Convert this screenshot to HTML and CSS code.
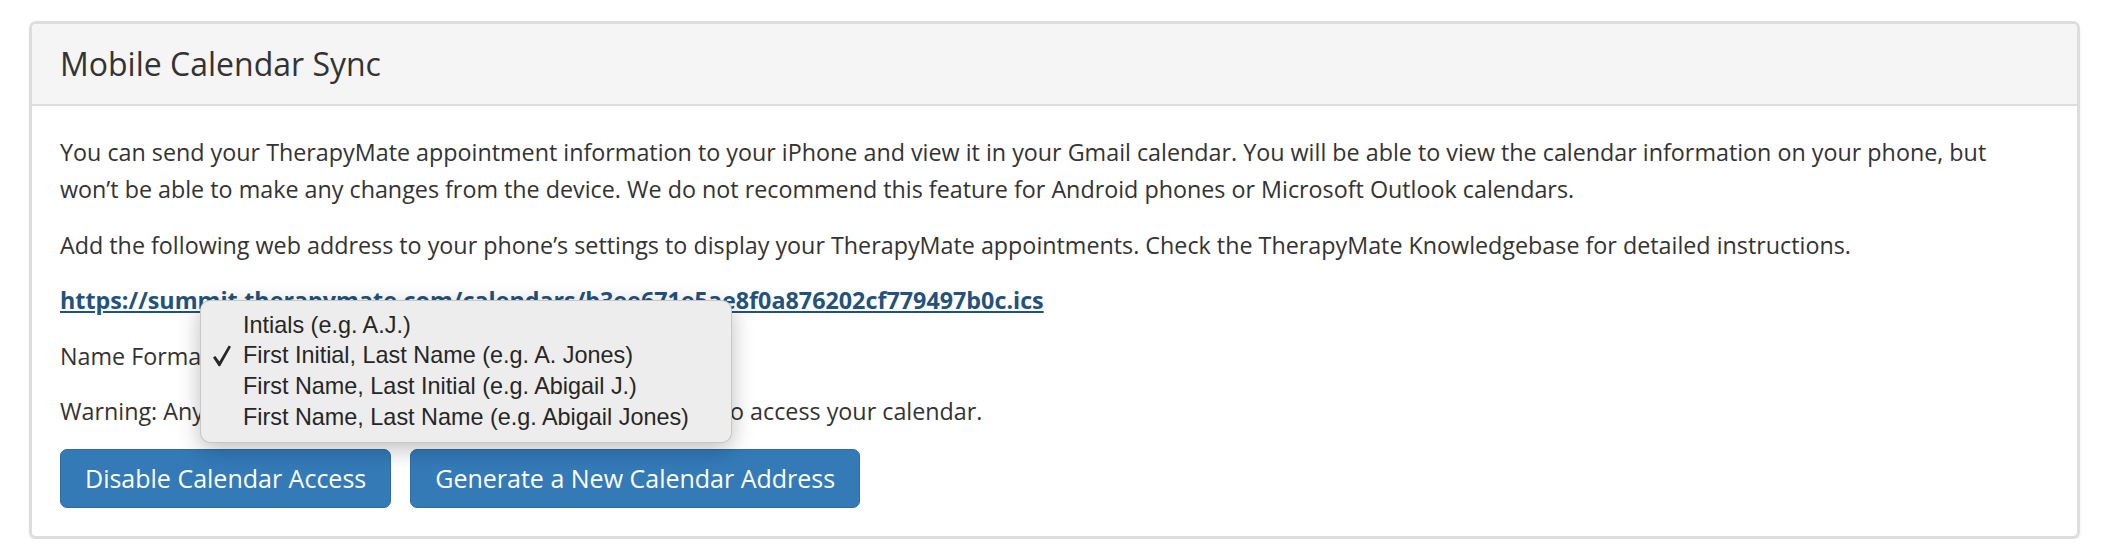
FILE: index.html
```html
<!DOCTYPE html>
<html lang="en">
<head>
<meta charset="utf-8">
<title>Mobile Calendar Sync</title>
<link rel="stylesheet" href="styles.css">
</head>
<body>
<div class="page">
  <section class="panel">
    <header class="panel-heading">
      <h3 class="panel-title">Mobile Calendar Sync</h3>
    </header>
    <div class="panel-body">
      <p>You can send your TherapyMate appointment information to your iPhone and view it in your Gmail calendar. You will be able to view the calendar information on your phone, but won’t be able to make any changes from the device. We do not recommend this feature for Android phones or Microsoft Outlook calendars.</p>
      <p>Add the following web address to your phone’s settings to display your TherapyMate appointments. Check the TherapyMate Knowledgebase for detailed instructions.</p>
      <p><a class="cal-link" href="#">https://summit.therapymate.com/calendars/b3ee671e5ae8f0a876202cf779497b0c.ics</a></p>
      <div class="form-row">
        <label class="form-label" for="nameFormat">Name Format:</label>
        <select class="name-select" id="nameFormat">
          <option>Intials (e.g. A.J.)</option>
          <option selected>First Initial, Last Name (e.g. A. Jones)</option>
          <option>First Name, Last Initial (e.g. Abigail J.)</option>
          <option>First Name, Last Name (e.g. Abigail Jones)</option>
        </select>
        <ul class="popup-menu">
          <li class="menu-item">Intials (e.g. A.J.)</li>
          <li class="menu-item checked"><svg class="check" viewBox="0 0 18 22" width="18" height="22" aria-hidden="true"><path d="M0 12.6 L2.3 10.9 L6.4 16.4 L15.7 0.4 L18 1.8 L7.1 21.2 L5.7 21.2 Z" fill="#262626"/></svg>First Initial, Last Name (e.g. A. Jones)</li>
          <li class="menu-item">First Name, Last Initial (e.g. Abigail J.)</li>
          <li class="menu-item">First Name, Last Name (e.g. Abigail Jones)</li>
        </ul>
      </div>
      <p>Warning: Anyone who gets this web address will also be able to access your calendar.</p>
      <div class="actions">
        <button class="btn" type="button">Disable Calendar Access</button>
        <button class="btn" type="button">Generate a New Calendar Address</button>
      </div>
    </div>
  </section>
</div>
</body>
</html>
```

FILE: styles.css
```css
* {
  box-sizing: border-box;
}

html, body {
  margin: 0;
  padding: 0;
  background: #ffffff;
}

body {
  font-family: "Open Sans", "DejaVu Sans", sans-serif;
  color: #333333;
}

.page {
  padding: 21px 48px 0 29px;
}

.panel {
  border: 3px solid #dddddd;
  border-radius: 7px;
  background: #ffffff;
  box-shadow: 0 2px 3px rgba(0, 0, 0, 0.06);
}

.panel-heading {
  background: #f5f5f5;
  border-bottom: 2px solid #dddddd;
  border-radius: 4px 4px 0 0;
  padding: 22px 28px;
}

.panel-title {
  margin: 0;
  font-size: 32px;
  font-weight: 400;
  line-height: 36px;
  color: #333333;
}

.panel-body {
  padding: 28px;
  font-size: 23.3px;
  line-height: 37px;
}

.panel-body p {
  margin: 0 0 18.5px;
}

.cal-link {
  color: #23527c;
  font-weight: 700;
  text-decoration: underline;
}

.form-row {
  position: relative;
  margin: 0 0 18.5px;
  height: 37px;
  display: flex;
  align-items: center;
  gap: 10px;
}

.form-label {
  font-weight: 400;
}

.name-select {
  height: 30px;
  width: 400px;
  font-family: "Liberation Sans", sans-serif;
  font-size: 18px;
}

.popup-menu {
  position: absolute;
  left: 140px;
  top: -38px;
  width: 532px;
  margin: 0;
  padding: 9px 0;
  list-style: none;
  background: #ededed;
  border: 1px solid rgba(0, 0, 0, 0.16);
  border-radius: 10px;
  box-shadow: 0 6px 22px rgba(0, 0, 0, 0.26);
  font-family: "Liberation Sans", Arial, sans-serif;
  font-size: 23.4px;
  color: #262626;
  z-index: 2;
}

.menu-item {
  position: relative;
  height: 30.8px;
  line-height: 30.8px;
  padding-left: 42px;
  white-space: nowrap;
}

.check {
  position: absolute;
  left: 12px;
  top: 5px;
}

.actions {
  display: flex;
  gap: 19px;
}

.btn {
  height: 59px;
  padding: 0 24px;
  font-family: "Open Sans", sans-serif;
  font-size: 25px;
  line-height: 57px;
  color: #ffffff;
  background: #337ab7;
  border: 1px solid #2e6da4;
  border-radius: 7px;
  cursor: pointer;
}
```
